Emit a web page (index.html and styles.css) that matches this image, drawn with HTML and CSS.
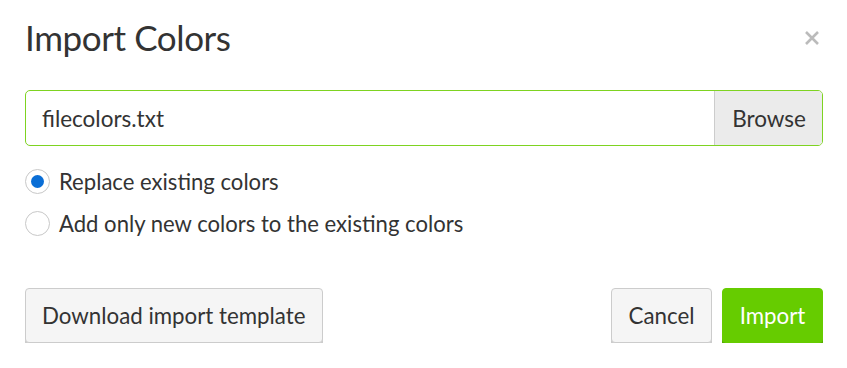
FILE: index.html
```html
<!DOCTYPE html>
<html>
<head>
<meta charset="utf-8">
<link rel="stylesheet" href="styles.css">
</head>
<body>
<div class="modal">
  <div class="header">
    <h1 class="title">Import Colors</h1>
    <span class="close" aria-label="Close">
      <svg width="14" height="14" viewBox="0 0 14 14"><path d="M1 1L13 13M13 1L1 13" stroke="#bbbbbb" stroke-width="2.6" fill="none"/></svg>
    </span>
  </div>
  <div class="file-input">
    <div class="file-name">filecolors.txt</div>
    <div class="browse">Browse</div>
  </div>
  <div class="options">
    <label class="radio-row"><span class="radio checked"></span><span>Replace existing colors</span></label>
    <label class="radio-row"><span class="radio"></span><span>Add only new colors to the existing colors</span></label>
  </div>
  <div class="footer">
    <button class="btn">Download import template</button>
    <div class="actions">
      <button class="btn btn-cancel">Cancel</button>
      <button class="btn btn-primary">Import</button>
    </div>
  </div>
</div>
</body>
</html>
```
FILE: styles.css
```css
html, body {
  margin: 0;
  padding: 0;
  background: #ffffff;
}
body {
  font-family: Lato, "Open Sans", sans-serif;
  color: #333333;
}
.modal {
  width: 847px;
  box-sizing: border-box;
  padding: 16px 24px 0 25px;
}
.header {
  display: flex;
  justify-content: space-between;
  align-items: flex-start;
}
.title {
  margin: 0;
  font-size: 35px;
  letter-spacing: -0.4px;
  font-weight: 400;
  line-height: 43px;
  color: #333333;
}
.close {
  display: flex;
  margin-top: 15px;
  margin-right: 4px;
}
.file-input {
  margin-top: 31px;
  display: flex;
  height: 56px;
  box-sizing: border-box;
  border: 1px solid #7ed321;
  border-radius: 5px;
  overflow: hidden;
  width: 798px;
}
.file-name {
  flex: 1;
  display: flex;
  align-items: center;
  padding-left: 16px;
  font-size: 22.5px;
}
.browse {
  display: flex;
  align-items: center;
  padding: 0 16px 0 17px;
  background: #ebebeb;
  border-left: 1px solid #cccccc;
  font-size: 22.5px;
}
.options {
  margin-top: 22px;
  display: flex;
  flex-direction: column;
  gap: 16px;
}
.radio-row {
  display: flex;
  align-items: center;
  gap: 9px;
  font-size: 22.1px;
  height: 26px;
}
.radio {
  width: 25px;
  height: 25px;
  box-sizing: border-box;
  border: 1px solid #c8c8c8;
  border-radius: 50%;
  display: flex;
  align-items: center;
  justify-content: center;
  background: #fff;
}
.radio.checked::after {
  content: "";
  width: 13px;
  height: 13px;
  border-radius: 50%;
  background: #0a6ed6;
}
.footer {
  margin-top: 52px;
  display: flex;
  justify-content: space-between;
  width: 798px;
}
.actions {
  display: flex;
  gap: 10px;
}
.btn {
  font-family: Lato, "Open Sans", sans-serif;
  font-size: 22.3px;
  color: #333333;
  height: 55px;
  padding: 0 16px;
  background: #f5f5f5;
  border: 1px solid #cccccc;
  border-radius: 4px;
  box-shadow: 0 3px 0 #cccccc;
  cursor: pointer;
}
.btn-cancel {
  width: 101px;
  padding: 0;
}
.btn-primary {
  width: 101px;
  padding: 0;
  background: #66cc00;
  border-color: #66cc00;
  color: #ffffff;
  box-shadow: 0 3px 0 #56ad00;
}
```
